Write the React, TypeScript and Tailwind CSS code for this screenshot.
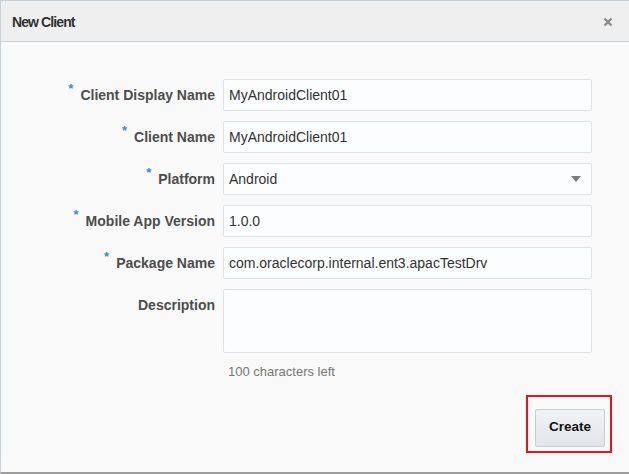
import { useState } from 'react'

const font = "font-['Liberation_Sans',Arial,sans-serif]"

function Label({ text, required }: { text: string; required?: boolean }) {
  return (
    <div className="flex h-8 items-center justify-end">
      {required && <span className="relative -top-[6px] mr-[7px] text-[13px] font-bold text-[#3b8ad4]">*</span>}
      <span className="text-[14px] font-bold text-[#4d4d4d]">{text}</span>
    </div>
  )
}

function TextInput({ value }: { value: string }) {
  return (
    <div className="flex h-8 items-center rounded-[2px] border border-[#dfe3e7] bg-[#fcfdfe] px-[5px] text-[14px] text-[#333]">
      {value}
    </div>
  )
}

export default function App() {
  const [chars] = useState(100)

  return (
    <div className={`${font} flex h-[474px] w-[629px] flex-col border-t border-l border-b-2 border-t-[#c6d0d9] border-l-[#c6d0d9] border-b-[#9d9d9d] bg-[#f9f9f9]`}>
      {/* header */}
      <div className="flex h-[41px] shrink-0 items-center justify-between border-b border-[#c6d0d9] bg-[#efefef] pt-[2px] pl-[11px] pr-[16px]">
        <span className="text-[14px] font-bold tracking-[-0.9px] text-[#333]">New Client</span>
        <svg width="10" height="10" viewBox="0 0 10 10">
          <path d="M1.5 1.5 L8.5 8.5 M8.5 1.5 L1.5 8.5" stroke="#888" strokeWidth="2.2" />
        </svg>
      </div>

      {/* form */}
      <div className="flex flex-1 flex-col pt-[37px]">
        <div className="grid grid-cols-[214px_369px] gap-x-[8px] gap-y-[10px]">
          <Label text="Client Display Name" required />
          <TextInput value="MyAndroidClient01" />

          <Label text="Client Name" required />
          <TextInput value="MyAndroidClient01" />

          <Label text="Platform" required />
          <div className="flex h-8 items-center justify-between rounded-[2px] border border-[#dfe3e7] bg-[#fcfdfe] pl-[5px] pr-[10px] text-[14px] text-[#333]">
            <span>Android</span>
            <svg width="10" height="6" viewBox="0 0 10 6">
              <path d="M0 0 L10 0 L5 6 Z" fill="#7a7a7a" />
            </svg>
          </div>

          <Label text="Mobile App Version" required />
          <TextInput value="1.0.0" />

          <Label text="Package Name" required />
          <TextInput value="com.oraclecorp.internal.ent3.apacTestDrv" />

          <Label text="Description" />
          <div className="h-[64px] rounded-[2px] border border-[#dfe3e7] bg-[#fcfdfe]" />

          <div />
          <p className="-mt-[1px] pl-[5px] text-[13px] text-[#777]">{chars} characters left</p>
        </div>

        <div className="mt-[13px] flex justify-end pr-[17px]">
          <div className="border-2 border-[#e8141c] pt-[12px] pr-[5px] pb-[4px] pl-[7px]">
            <button className="h-[38px] w-[70px] rounded-[2px] border border-[#c5ced6] bg-gradient-to-b from-[#f0f2f4] to-[#e2e6ea] text-[13.5px] font-bold text-[#111]">
              Create
            </button>
          </div>
        </div>
      </div>
    </div>
  )
}
